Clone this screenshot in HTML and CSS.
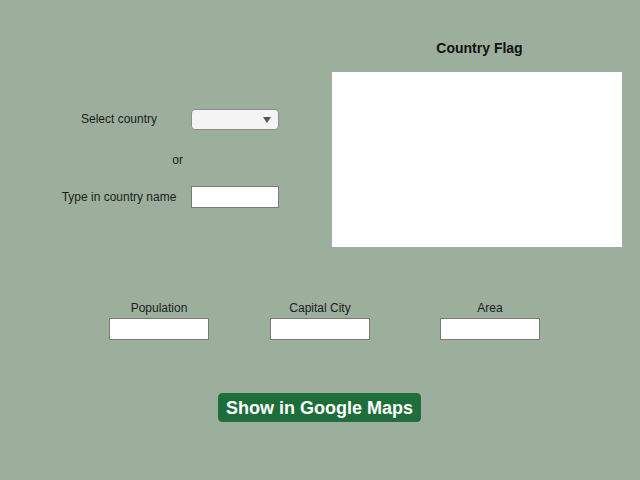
FILE: index.html
```html
<!DOCTYPE html>
<html>
<head>
<meta charset="utf-8">
<link rel="stylesheet" href="styles.css">
</head>
<body>
<div class="app">
  <div class="top">
    <div class="chooser">
      <div class="label">Select country</div>
      <div class="select"><span class="arrow"></span></div>
      <div class="or">or</div>
      <div class="label">Type in country name</div>
      <input class="field name" type="text">
    </div>
    <div class="flag-panel">
      <div class="flag-title">Country Flag</div>
      <div class="flag-box"></div>
    </div>
  </div>
  <div class="facts">
    <div class="fact">
      <div class="fact-label">Population</div>
      <input class="field fact-input" type="text">
    </div>
    <div class="fact">
      <div class="fact-label">Capital City</div>
      <input class="field fact-input" type="text">
    </div>
    <div class="fact">
      <div class="fact-label">Area</div>
      <input class="field fact-input" type="text">
    </div>
  </div>
  <div class="actions">
    <button class="maps-btn" type="button">Show in Google Maps</button>
  </div>
</div>
</body>
</html>
```
FILE: styles.css
```css
html, body {
  margin: 0;
  padding: 0;
}
body {
  background: #9caf9c;
  font-family: "Liberation Sans", Arial, sans-serif;
  color: #1c1c1c;
}
.app {
  width: 640px;
  height: 480px;
  overflow: hidden;
}
.top {
  display: flex;
  align-items: flex-start;
  height: 247px;
}
.chooser {
  width: 282px;
  margin-left: 50px;
  margin-top: 109px;
  display: grid;
  grid-template-columns: 141px 88px;
  grid-template-rows: 21px 56px 22px;
  align-items: center;
}
.label {
  font-size: 12px;
  line-height: 14px;
  text-align: center;
  padding-right: 3px;
  padding-bottom: 1px;
}
.select {
  box-sizing: border-box;
  height: 21px;
  width: 88px;
  background: #f4f4f4;
  border: 1px solid #8c8c8c;
  border-radius: 4px;
  display: flex;
  align-items: center;
  justify-content: flex-end;
  padding-right: 7px;
}
.arrow {
  width: 0;
  height: 0;
  border-left: 4px solid transparent;
  border-right: 4px solid transparent;
  border-top: 6px solid #555555;
}
.or {
  grid-column: 1 / 2;
  justify-self: end;
  font-size: 12px;
  line-height: 14px;
  padding-top: 4px;
  padding-right: 8px;
}
.or + .label {
  grid-column: 1 / 2;
}
.field {
  box-sizing: border-box;
  height: 22px;
  margin: 0;
  padding: 0 4px;
  border: 1px solid #7a7a7a;
  border-radius: 0;
  background: #ffffff;
  font-family: "Liberation Sans", Arial, sans-serif;
  font-size: 12px;
  outline: none;
}
.name {
  width: 88px;
  grid-column: 2 / 3;
}
.flag-panel {
  display: flex;
  flex-direction: column;
  padding-top: 40px;
}
.flag-title {
  font-size: 14px;
  line-height: 16px;
  font-weight: bold;
  text-align: center;
  padding-left: 5px;
  color: #111111;
}
.flag-box {
  margin-top: 16px;
  width: 290px;
  height: 175px;
  background: #ffffff;
}
.facts {
  margin-top: 54px;
  padding-left: 109px;
  display: grid;
  grid-template-columns: 161px 170px 100px;
}
.fact {
  width: 100px;
  display: flex;
  flex-direction: column;
  align-items: center;
  gap: 3px;
}
.fact-label {
  font-size: 12px;
  line-height: 14px;
}
.fact-input {
  width: 100px;
}
.actions {
  margin-top: 53px;
  display: flex;
  justify-content: center;
  padding-right: 1px;
}
.maps-btn {
  box-sizing: border-box;
  height: 29px;
  width: 203px;
  padding: 0;
  background: #1e6e3c;
  border: 1px solid #2b6b42;
  border-radius: 4px;
  color: #ffffff;
  font-family: "Liberation Sans", Arial, sans-serif;
  font-size: 18px;
  font-weight: bold;
  line-height: 28px;
}
```
